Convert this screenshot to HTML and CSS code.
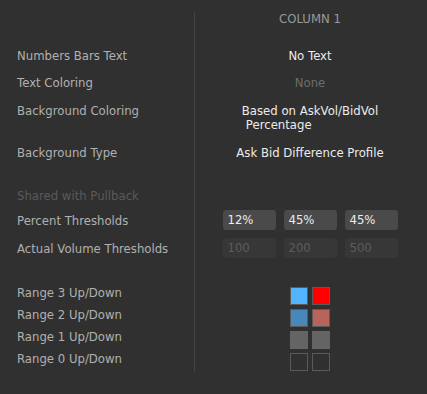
FILE: index.html
```html
<!DOCTYPE html>
<html>
<head>
<meta charset="utf-8">
<link rel="stylesheet" href="styles.css">
</head>
<body>
<div class="panel">
  <div class="row r-header">
    <div class="label"></div>
    <div class="value header">COLUMN 1</div>
  </div>
  <div class="row r-numbers">
    <div class="label">Numbers Bars Text</div>
    <div class="value strong">No Text</div>
  </div>
  <div class="row r-tight">
    <div class="label">Text Coloring</div>
    <div class="value dim">None</div>
  </div>
  <div class="row r-tight2">
    <div class="label">Background Coloring</div>
    <div class="value strong"><div class="multi"><span class="line">Based on AskVol/BidVol</span><span class="line indent">Percentage</span></div></div>
  </div>
  <div class="row r-tight2">
    <div class="label">Background Type</div>
    <div class="value strong">Ask Bid Difference Profile</div>
  </div>
  <div class="row r-shared">
    <div class="label muted">Shared with Pullback</div>
    <div class="value"></div>
  </div>
  <div class="row r-inputs">
    <div class="label lbl-input">Percent Thresholds</div>
    <div class="value boxes">
      <div class="box">12%</div>
      <div class="box">45%</div>
      <div class="box">45%</div>
    </div>
  </div>
  <div class="row r-inputs2">
    <div class="label lbl-input">Actual Volume Thresholds</div>
    <div class="value boxes">
      <div class="box disabled">100</div>
      <div class="box disabled">200</div>
      <div class="box disabled">500</div>
    </div>
  </div>
  <div class="row range r-range-first">
    <div class="label">Range 3 Up/Down</div>
    <div class="value swatches"><span class="sw c-lblue"></span><span class="sw c-red"></span></div>
  </div>
  <div class="row range">
    <div class="label">Range 2 Up/Down</div>
    <div class="value swatches"><span class="sw c-sblue"></span><span class="sw c-ired"></span></div>
  </div>
  <div class="row range">
    <div class="label">Range 1 Up/Down</div>
    <div class="value swatches"><span class="sw c-gray"></span><span class="sw c-gray"></span></div>
  </div>
  <div class="row range">
    <div class="label">Range 0 Up/Down</div>
    <div class="value swatches"><span class="sw c-empty"></span><span class="sw c-empty"></span></div>
  </div>
</div>
</body>
</html>
```
FILE: styles.css
```css
html, body {
  margin: 0;
  padding: 0;
  background: #303030;
  width: 427px;
  height: 394px;
  overflow: hidden;
}
body {
  font-family: "DejaVu Sans", Verdana, sans-serif;
  font-size: 11.7px;
  line-height: 14px;
  color: #b0b0b0;
}
.panel {
  width: 425px;
  margin-top: 12px;
  display: flex;
  flex-direction: column;
  background: linear-gradient(#444444, #444444) no-repeat 194px 0 / 1px calc(100% - 2px);
}
.row {
  display: grid;
  grid-template-columns: 195px 230px;
  align-items: start;
}
.label {
  padding-left: 17px;
  white-space: nowrap;
}
.value {
  text-align: center;
  white-space: nowrap;
}
.header { color: #999999; }
.strong { color: #ececec; }
.dim { color: #6c6c6c; }
.muted { color: #5a5a5a; }

.r-numbers { margin-top: 23px; }
.r-tight { margin-top: 13px; }
.r-tight2 { margin-top: 14px; }
.r-shared { margin-top: 29px; }
.r-inputs { margin-top: 7px; }
.r-inputs2 { margin-top: 8px; }
.r-range-first { margin-top: 28px; }

.multi {
  display: inline-flex;
  flex-direction: column;
  text-align: left;
}
.indent { padding-left: 4px; }

.lbl-input { padding-top: 4px; }
.boxes {
  display: flex;
  justify-content: center;
  gap: 8px;
}
.box {
  width: 53px;
  height: 20px;
  box-sizing: border-box;
  padding-left: 5px;
  line-height: 20px;
  text-align: left;
  border-radius: 3px;
  background: #4a4a4a;
  color: #ececec;
}
.box.disabled {
  background: #373737;
  color: #5c5c5c;
}

.range { height: 22px; }
.swatches {
  display: flex;
  justify-content: center;
  gap: 4px;
  padding-top: 1px;
}
.sw {
  width: 18px;
  height: 18px;
  box-sizing: border-box;
  border: 1px solid #5a5a5a;
}
.c-lblue { background: #52b4ff; }
.c-red { background: #ff0000; }
.c-sblue { background: #4887b9; }
.c-ired { background: #b9645a; }
.c-gray { background: #646464; border-color: #646464; }
.c-empty { background: transparent; }
```
